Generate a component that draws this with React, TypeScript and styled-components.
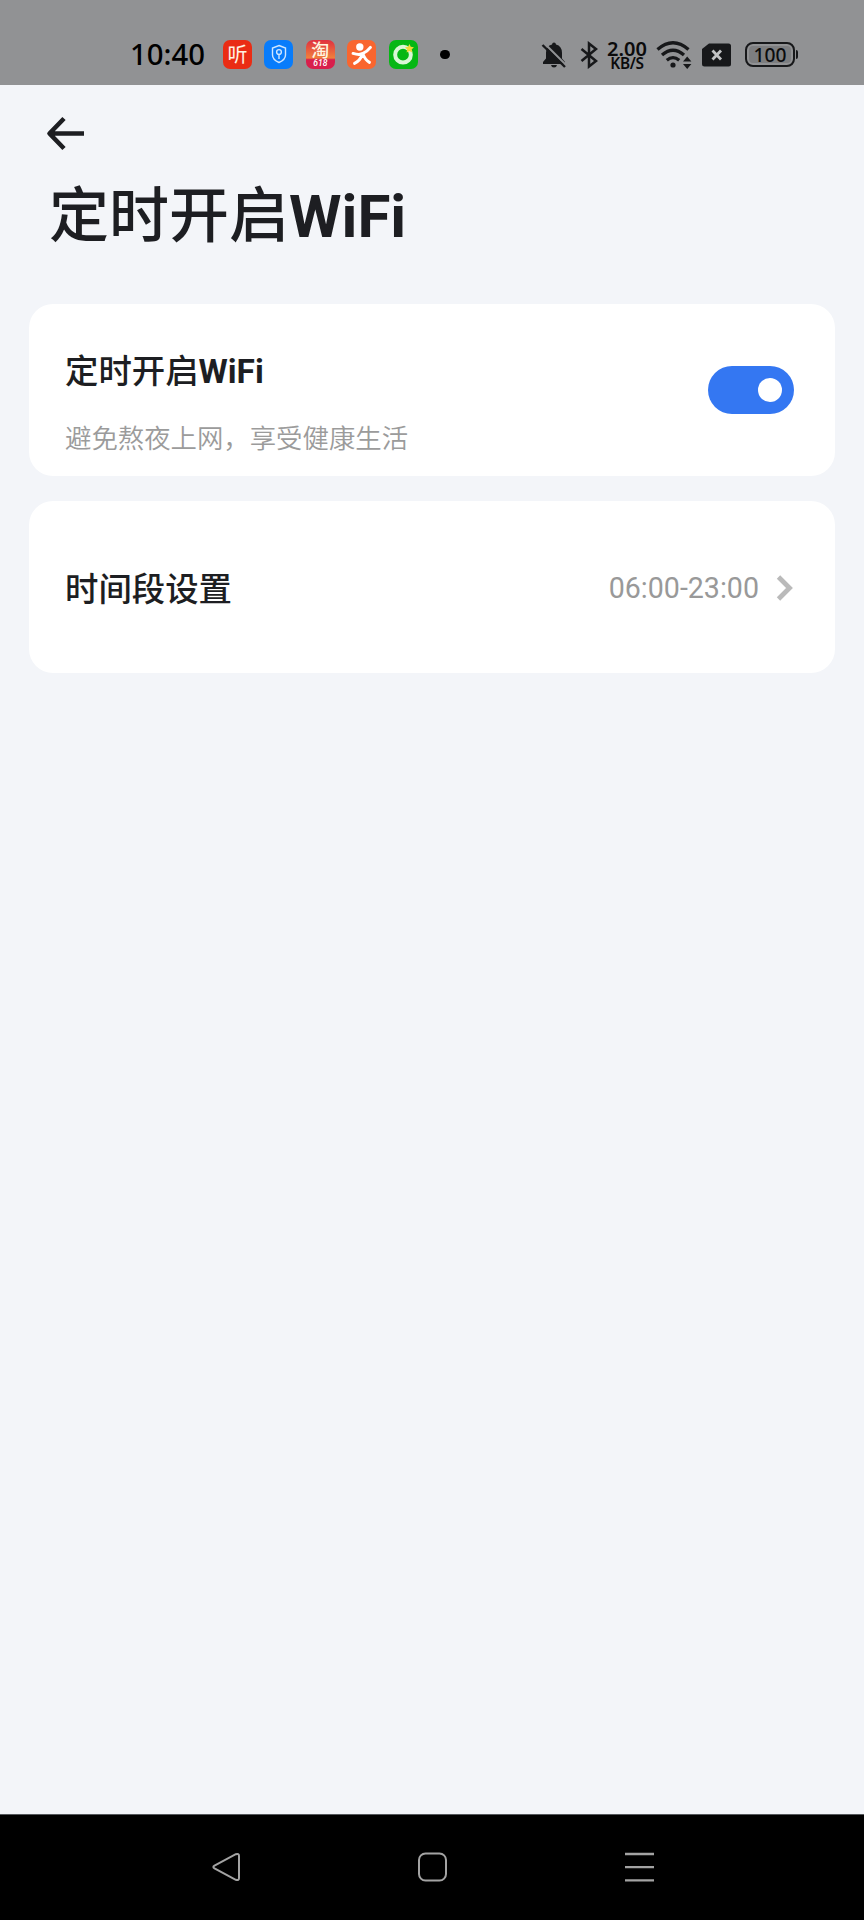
import React from "react";
import styled, { createGlobalStyle } from "styled-components";

const GlobalStyle = createGlobalStyle`
  *, *::before, *::after { box-sizing: border-box; }
  body { margin: 0; background: #f3f5f9; }
  h1, h2, p { margin: 0; }
  button { border: 0; padding: 0; background: none; }
  svg { display: block; }
`;

const Screen = styled.div`
  width: 864px;
  height: 1920px;
  display: flex;
  flex-direction: column;
  background: #f3f5f9;
  font-family: Roboto, "Noto Sans CJK SC", sans-serif;
  color: #1d1e22;
  overflow: hidden;
`;

const StatusBar = styled.header`
  height: 85px;
  flex: none;
  display: flex;
  justify-content: space-between;
  padding: 24px 66px 0 130px;
  background: #919294;
  color: #0b0b0c;
  font-family: "Noto Sans", sans-serif;
`;

const StatusGroup = styled.div`
  height: 61px;
  display: flex;
  align-items: center;
`;

const Clock = styled.time`
  width: 93px;
  font-size: 29.3px;
  font-weight: 500;
  line-height: 61px;
  height: 61px;
  color: #000;
`;

const Notifications = styled.div`
  display: flex;
  gap: 12.7px;
  align-items: center;
`;

const AppIcon = styled.span<{ $bg: string }>`
  width: 28.8px;
  height: 28.8px;
  border-radius: 7px;
  background: ${(p) => p.$bg};
  display: flex;
  flex-direction: column;
  align-items: center;
  justify-content: center;
`;

const ListenGlyph = styled.span`
  font: 400 20px/28px "Noto Sans CJK SC", sans-serif;
  color: #fff3e2;
`;

const ShopGlyph = styled.span`
  font: 500 18px/19px "Noto Sans CJK SC", sans-serif;
  color: #fff6e0;
`;

const SaleTag = styled.span`
  color: #fff;
  font: italic 500 8.5px/9px Roboto, sans-serif;
`;

const Dot = styled.span`
  width: 9.5px;
  height: 9.5px;
  margin-left: 10px;
  border-radius: 50%;
  background: #000;
`;

const Speed = styled.div`
  width: 40px;
  margin: 0 9px 0 9px;
  padding-top: 4px;
  display: flex;
  flex-direction: column;
  align-items: center;
`;

const SpeedValue = styled.span`
  font-size: 20px;
  font-weight: 600;
  line-height: 14px;
`;

const SpeedUnit = styled.span`
  font-size: 15.4px;
  font-weight: 600;
  line-height: 16px;
  letter-spacing: -0.3px;
`;

const Battery = styled.span`
  width: 50px;
  height: 25px;
  display: flex;
  align-items: center;
  justify-content: center;
  border: 2px solid #17181a;
  border-radius: 8px;
  background: #7d7e80;
  box-shadow: inset 0 0 0 2px #919294;
  font-size: 19.2px;
  font-weight: 500;
  line-height: 21px;
`;

const BatteryTip = styled.span`
  width: 2px;
  height: 9px;
  margin-left: 1px;
  background: #17181a;
  border-radius: 0 2px 2px 0;
`;

const Gap = styled.span<{ $w: number }>`
  width: ${(p) => p.$w}px;
  flex: none;
`;

const Page = styled.main`
  flex: 1;
  padding: 30px 29px 0;
`;

const BackButton = styled.button`
  display: block;
  margin-left: 17px;
`;

const PageTitle = styled.h1`
  margin: 17px 0 0 20px;
  height: 135px;
  font-size: 60px;
  line-height: 96px;
  font-weight: 500;
`;

const Latin = styled.span`
  font-weight: 700;
`;

const Card = styled.section`
  display: flex;
  align-items: center;
  justify-content: space-between;
  height: 172px;
  margin-bottom: 25px;
  padding: 0 41px 0 36px;
  border-radius: 24px;
  background: #fff;
`;

const CardText = styled.div`
  padding-top: 25px;
`;

const CardTitle = styled.h2`
  font-size: 33.4px;
  line-height: 48px;
  font-weight: 500;
`;

const RowTitle = styled(CardTitle)`
  padding-top: 6px;
`;

const Hint = styled.p`
  margin-top: 25px;
  font-size: 26.4px;
  line-height: 36px;
  color: #9b9b9b;
  font-weight: 350;
`;

const Switch = styled.button`
  width: 86px;
  height: 48px;
  display: flex;
  align-items: center;
  justify-content: flex-end;
  padding-right: 12px;
  border-radius: 24px;
  background: #3477f2;
`;

const Knob = styled.span`
  width: 24px;
  height: 24px;
  border-radius: 50%;
  background: #fff;
`;

const Period = styled.div`
  display: flex;
  align-items: center;
  gap: 16px;
  padding-top: 1px;
  font-size: 28.6px;
  line-height: 40px;
  color: #999;
`;

const NavBar = styled.nav`
  height: 106px;
  flex: none;
  display: flex;
  align-items: center;
  justify-content: space-between;
  padding: 0 208px 2px 210px;
  border-top: 1px solid #55585c;
  background: #000;
`;

const ShieldIcon = () => (
  <svg width="18" height="20" viewBox="0 0 18 20" fill="none" stroke="#cfe6ff" strokeWidth="1.4">
    <path d="M9 1.500 15.500 4v7c0 3.500-3 6-6.500 7.500C5.500 17 2.500 14.500 2.500 11V4Z" />
    <circle cx="9" cy="8" r="2.400" />
    <path d="M9 10.500V15" />
  </svg>
);

const RunnerIcon = () => (
  <svg width="29" height="29" viewBox="0 0 29 29" fill="none" stroke="#fff" strokeLinecap="round" strokeLinejoin="round">
    <circle cx="12.800" cy="7" r="3.700" fill="#fff" stroke="none" />
    <path d="M6 13.500q6.500 2 10 0 4.500-2 7.500-6M15.500 14.500Q13 21 7.500 23.500M16 14q2 6 6.500 8.500" strokeWidth="3" />
  </svg>
);

const RingIcon = () => (
  <svg width="29" height="29" viewBox="0 0 29 29" fill="none">
    <circle cx="14" cy="14.800" r="7.900" stroke="#d9f7d6" strokeWidth="4" />
    <path d="m20.500 4 1.300 2.900 3.200.4-2.300 2.200.6 3.200-2.800-1.500-2.900 1.500.6-3.200-2.200-2.200 3.100-.4Z" fill="#f2d838" />
  </svg>
);

const MutedBellIcon = () => (
  <svg width="26" height="28" viewBox="0 0 26 28">
    <path d="M13 1.500q1.800 0 2 2Q21 5 21 12v5.500l3 3.500v2H2v-2l3-3.500V12q0-7 6-8.500.2-2 2-2ZM10 24h6q-.5 2.500-3 2.500T10 24Z" fill="#17181a" />
    <path d="M3 2 26 25" stroke="#919294" strokeWidth="2.200" />
    <path d="m1.500 4 22.500 22" stroke="#17181a" strokeWidth="2.400" />
  </svg>
);

const BluetoothIcon = () => (
  <svg width="18" height="28" viewBox="0 0 18 28" fill="none" stroke="#17181a" strokeWidth="2.500">
    <path d="m1.500 8 14.500 12-7 5.500v-23L16 8 1.500 20" />
  </svg>
);

const WifiIcon = () => (
  <svg width="36" height="29" viewBox="0 0 36 29" fill="none" stroke="#17181a" strokeWidth="3.300">
    <path d="M1.500 9.500q15.500-13.500 31 0M6 15q11-9.500 22 0M10.800 20.200q6.200-5.200 12.400 0" />
    <circle cx="17" cy="25" r="2.600" fill="#17181a" stroke="none" />
    <path d="m27 21.500 4.200-5 4.200 5Zm0 2.500 4.200 5 4.200-5Z" fill="#17181a" stroke="none" />
  </svg>
);

const SimIcon = () => (
  <svg width="29" height="24" viewBox="0 0 29 24">
    <path d="M7 .5h19.500q2.500 0 2.500 2.500v18q0 2.500-2.500 2.500h-24Q0 23.500 0 21V6Z" fill="#17181a" />
    <path d="m10.500 7.500 8.500 9m0-9-8.500 9" stroke="#c2c3c4" strokeWidth="2.800" />
  </svg>
);

const ArrowLeftIcon = () => (
  <svg width="40" height="37" viewBox="0 0 40 37" fill="none" stroke="#1d1e22" strokeWidth="4.600">
    <path d="M38 18.500H4M18 3.500l-14.500 15 14.500 15" strokeLinejoin="round" />
  </svg>
);

const ChevronIcon = () => (
  <svg width="19" height="28" viewBox="0 0 19 28" fill="none" stroke="#bababa" strokeWidth="4.800">
    <path d="m3.500 3 11 11-11 11" />
  </svg>
);

const NavBackIcon = () => (
  <svg width="34" height="34" viewBox="0 0 34 34" fill="none" stroke="#a3a3a3" strokeWidth="2">
    <path d="M4.500 15.600 25.800 4.200q3.200-1 3.200 1.800v22q0 2.800-3.200 1.800L4.500 18.400q-2.300-1.400 0-2.800Z" />
  </svg>
);

const NavHomeIcon = () => (
  <svg width="34" height="34" viewBox="0 0 34 34" fill="none" stroke="#a3a3a3" strokeWidth="2">
    <rect x="3" y="3.500" width="27" height="27" rx="6.500" />
  </svg>
);

const NavMenuIcon = () => (
  <svg width="34" height="34" viewBox="0 0 34 34" stroke="#a3a3a3" strokeWidth="2.300">
    <path d="M3 4h29M3 17.200h29M3 30.300h29" />
  </svg>
);

export default function App() {
  return (
    <Screen>
      <GlobalStyle />
      <StatusBar>
        <StatusGroup>
          <Clock>10:40</Clock>
          <Notifications>
            <AppIcon $bg="#ea2c14"><ListenGlyph>听</ListenGlyph></AppIcon>
            <AppIcon $bg="#087cfb"><ShieldIcon /></AppIcon>
            <AppIcon $bg="linear-gradient(#e03040, #f0803c 62%, #d81f4c 68%)">
              <ShopGlyph>淘</ShopGlyph>
              <SaleTag>618</SaleTag>
            </AppIcon>
            <AppIcon $bg="#f9662f"><RunnerIcon /></AppIcon>
            <AppIcon $bg="#06b714"><RingIcon /></AppIcon>
            <Dot />
          </Notifications>
        </StatusGroup>
        <StatusGroup>
          <MutedBellIcon />
          <Gap $w={13} />
          <BluetoothIcon />
          <Speed>
            <SpeedValue>2.00</SpeedValue>
            <SpeedUnit>KB/S</SpeedUnit>
          </Speed>
          <WifiIcon />
          <Gap $w={10} />
          <SimIcon />
          <Gap $w={14} />
          <Battery>100</Battery>
          <BatteryTip />
        </StatusGroup>
      </StatusBar>
      <Page>
        <BackButton aria-label="返回"><ArrowLeftIcon /></BackButton>
        <PageTitle>定时开启<Latin>WiFi</Latin></PageTitle>
        <Card>
          <CardText>
            <CardTitle>定时开启<Latin>WiFi</Latin></CardTitle>
            <Hint>避免熬夜上网，享受健康生活</Hint>
          </CardText>
          <Switch role="switch" aria-checked="true"><Knob /></Switch>
        </Card>
        <Card>
          <RowTitle>时间段设置</RowTitle>
          <Period>
            <span>06:00-23:00</span>
            <ChevronIcon />
          </Period>
        </Card>
      </Page>
      <NavBar>
        <NavBackIcon />
        <NavHomeIcon />
        <NavMenuIcon />
      </NavBar>
    </Screen>
  );
}
